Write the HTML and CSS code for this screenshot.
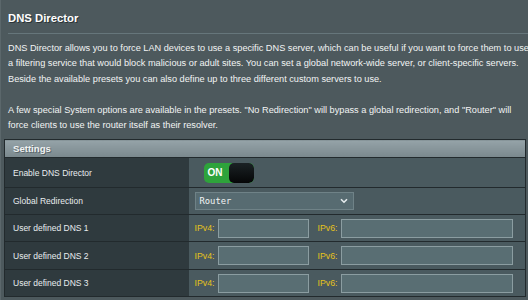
FILE: index.html
```html
<!DOCTYPE html>
<html lang="en">

<head>
    <meta charset="UTF-8">
    <meta name="viewport" content="width=device-width, initial-scale=1.0">
    <title>DNS Director</title>
    <link rel="stylesheet" href="styles.css">
</head>

<body>
    <div id="content">
        <div class="formfonttitle">DNS Director</div>
        <div class="splitLine"></div>
        <div class="formfontdesc">
            DNS Director allows you to force LAN devices to use a specific DNS server, which can be useful if you want to force them to use<br>
            a filtering service that would block malicious or adult sites. You can set a global network-wide server, or client-specific servers.<br>
            Beside the available presets you can also define up to three different custom servers to use.<br><br>
            A few special System options are available in the presets. "No Redirection" will bypass a global redirection, and "Router" will<br>
            force clients to use the router itself as their resolver.
        </div>

        <table class="FormTable">
            <thead>
                <tr>
                    <td colspan="2">Settings</td>
                </tr>
            </thead>
            <tr class="row-switch">
                <th>Enable DNS Director</th>
                <td>
                    <div class="iphone_switch">
                        <span class="on">ON</span>
                        <span class="knob"></span>
                    </div>
                </td>
            </tr>
            <tr>
                <th>Global Redirection</th>
                <td>
                    <div class="input_option">
                        <span>Router</span>
                        <svg width="8" height="6" viewBox="0 0 8 6">
                            <path d="M1 1.2 L4 4.2 L7 1.2" fill="none" stroke="#e6ecee" stroke-width="1.6" />
                        </svg>
                    </div>
                </td>
            </tr>
            <tr>
                <th>User defined DNS 1</th>
                <td>
                    <div class="dns_pair">
                        <span class="ip_label">IPv4:</span><span class="input_box v4"></span>
                        <span class="ip_label six">IPv6:</span><span class="input_box v6"></span>
                    </div>
                </td>
            </tr>
            <tr class="row-tall">
                <th>User defined DNS 2</th>
                <td>
                    <div class="dns_pair">
                        <span class="ip_label">IPv4:</span><span class="input_box v4"></span>
                        <span class="ip_label six">IPv6:</span><span class="input_box v6"></span>
                    </div>
                </td>
            </tr>
            <tr>
                <th>User defined DNS 3</th>
                <td>
                    <div class="dns_pair">
                        <span class="ip_label">IPv4:</span><span class="input_box v4"></span>
                        <span class="ip_label six">IPv6:</span><span class="input_box v6"></span>
                    </div>
                </td>
            </tr>
        </table>
    </div>
</body>

</html>
```

FILE: styles.css
```css
* {
    margin: 0;
    padding: 0;
    box-sizing: border-box;
}

body {
    background-color: #4d595d;
    font-family: "Liberation Sans", Arial, sans-serif;
    color: #fff;
    height: 300px;
    overflow: hidden;
}

#content {
    padding: 10px 0 0 0;
    border-left: 1px solid #5b676b;
    height: 300px;
}

.formfonttitle {
    font-size: 11.3px;
    font-weight: bold;
    line-height: 16px;
    padding-left: 7px;
    text-shadow: 1px 1px 0 #2b3336;
}

.splitLine {
    height: 1px;
    background-color: #66767b;
    margin: 7px 0 0 7px;
}

.formfontdesc {
    font-size: 9.2px;
    line-height: 15.4px;
    padding: 7px 0 0 7px;
    color: #f2f4f4;
    white-space: nowrap;
}

.FormTable {
    margin: 6px 0 0 3px;
    width: 522px;
    border-collapse: collapse;
    border: 1px solid #222a2d;
    font-size: 8.5px;
}

.FormTable thead td {
    height: 18px;
    padding-left: 8px;
    font-size: 9.6px;
    font-weight: bold;
    color: #f0f2f2;
    background: linear-gradient(#95a3a8, #7a888d);
    border-bottom: 1px solid #222a2d;
    text-shadow: 1px 1px 0 #5a666a;
}

.FormTable th {
    width: 184px;
    height: 27px;
    text-align: left;
    font-weight: normal;
    padding-left: 8px;
    background-color: #2f3a3e;
    color: #e8ecee;
    border-bottom: 1px solid #222a2d;
}

.FormTable td {
    background-color: #4a5a5f;
    border-bottom: 1px solid #222a2d;
    padding-left: 6px;
}

.row-switch th,
.row-switch td {
    height: 30px;
}

.row-tall th,
.row-tall td {
    height: 28px;
}

.iphone_switch {
    display: flex;
    width: 50px;
    height: 20px;
    margin-left: 9px;
    border-radius: 5px;
    overflow: hidden;
    background-color: #2ea33b;
}

.iphone_switch .on {
    width: 25px;
    font-size: 10px;
    font-weight: bold;
    line-height: 20px;
    padding-left: 4px;
    color: #fff;
}

.iphone_switch .knob {
    flex: 1;
    border-radius: 5px;
    background: linear-gradient(#1b2225, #050607);
}

.input_option {
    display: flex;
    align-items: center;
    justify-content: space-between;
    width: 159px;
    height: 18px;
    padding: 0 5px 0 4px;
    background-color: #576b71;
    border: 1px solid #6f8287;
    font-family: "DejaVu Sans Mono", monospace;
    font-size: 8.8px;
    color: #f2f4f4;
}

.dns_pair {
    display: flex;
    align-items: center;
}

.ip_label {
    color: #e6c21a;
    font-size: 8.8px;
    width: 23px;
}

.ip_label.six {
    margin-left: 9px;
}

.input_box {
    height: 19px;
    background-color: #596e73;
    border: 1px solid #8b9da1;
}

.input_box.v4 {
    width: 91px;
}

.input_box.v6 {
    width: 172px;
}
```
